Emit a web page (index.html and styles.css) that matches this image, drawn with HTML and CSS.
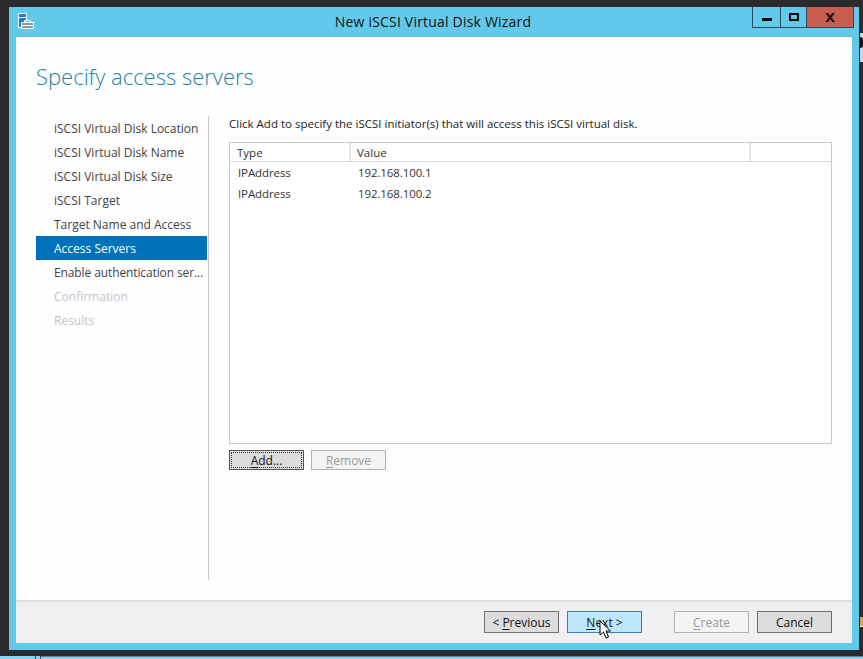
FILE: index.html
```html
<!DOCTYPE html>
<html lang="en">
<head>
    <meta charset="UTF-8">
    <title>New iSCSI Virtual Disk Wizard</title>
    <link rel="stylesheet" href="styles.css">
</head>
<body>

    <div class="window">
        <div class="titlebar">
            <svg class="app-icon" width="16" height="16" viewBox="0 0 16 16">
                <rect x="0.5" y="0.5" width="8" height="14" fill="#1c7ed6" stroke="#fff"/>
                <rect x="1" y="4" width="7" height="1" fill="#fff"/>
                <rect x="3.5" y="9.5" width="12" height="6" fill="#8a95a3" stroke="#fff"/>
                <path d="M6.5 9V7.5h6V9" fill="#63c9eb" stroke="#fff"/>
                <rect x="4" y="12" width="11" height="1" fill="#fff"/>
            </svg>
            <div class="title">New iSCSI Virtual Disk Wizard</div>
            <div class="winbtns">
                <div class="winbtn min"><span class="min-glyph"></span></div>
                <div class="winbtn max"><span class="max-glyph"></span></div>
                <div class="winbtn close">X</div>
            </div>
        </div>

        <div class="client">
            <div class="content">
                <h1 class="heading">Specify access servers</h1>
                <div class="columns">
                    <ul class="steps">
                        <li>iSCSI Virtual Disk Location</li>
                        <li>iSCSI Virtual Disk Name</li>
                        <li>iSCSI Virtual Disk Size</li>
                        <li>iSCSI Target</li>
                        <li>Target Name and Access</li>
                        <li class="current">Access Servers</li>
                        <li class="tight">Enable authentication ser...</li>
                        <li class="disabled">Confirmation</li>
                        <li class="disabled">Results</li>
                    </ul>
                    <div class="panel">
                        <p class="intro">Click Add to specify the iSCSI initiator(s) that will access this iSCSI virtual disk.</p>
                        <div class="list">
                            <div class="list-head">
                                <div class="col-type">Type</div>
                                <div class="col-value">Value</div>
                                <div class="col-extra"></div>
                            </div>
                            <div class="list-row">
                                <div class="col-type">IPAddress</div>
                                <div class="col-value">192.168.100.1</div>
                            </div>
                            <div class="list-row">
                                <div class="col-type">IPAddress</div>
                                <div class="col-value">192.168.100.2</div>
                            </div>
                        </div>
                        <div class="list-actions">
                            <button class="btn focused"><span class="focus-ring"><u>A</u>dd...</span></button>
                            <button class="btn off"><u>R</u>emove</button>
                        </div>
                    </div>
                </div>
            </div>
            <div class="footer">
                <button class="btn">&lt; <u>P</u>revious</button>
                <div class="next-wrap">
                    <button class="btn hover"><u>N</u>ext &gt;</button>
                    <svg class="cursor" width="13" height="20" viewBox="0 0 13 20">
                        <path d="M1 1V15L4.5 12L7 18L9.5 17L7 11H11.5Z" fill="#fff" stroke="#000"/>
                    </svg>
                </div>
                <button class="btn off create"><u>C</u>reate</button>
                <button class="btn">Cancel</button>
            </div>
        </div>
    </div>

    <!-- bits of the windows behind the wizard -->
    <div class="behind-right"><span class="behind-glyph"></span></div>
    <div class="behind-right-low"></div>
    <div class="bottom-strip"></div>
    <div class="bottom-line"></div>
    <div class="bottom-tick first"></div>
    <div class="bottom-tick second"></div>

</body>
</html>
```

FILE: styles.css
```css
html, body { margin: 0; height: 659px; overflow: hidden; }
body { background: #2b2b2b; font-family: "Open Sans", "Noto Sans", sans-serif; font-size: 12px; position: relative; }

.window { width: 850px; height: 643px; margin: 7px 0 0 9px; background: #63c9eb; padding: 0 7px 7px; box-sizing: border-box; display: flex; flex-direction: column; }

.titlebar { height: 30px; flex: none; display: flex; align-items: flex-start; position: relative; }
.app-icon { margin: 6px 0 0 2px; }
.title { position: absolute; left: 0; right: 2px; top: 5px; text-align: center; font-size: 14px; letter-spacing: 0.2px; color: #111; line-height: 20px; }
.winbtns { position: absolute; right: -2px; top: 0; display: flex; height: 21px; border: 1px solid #2d4a5c; border-top: 0; box-sizing: border-box; }
.winbtn { height: 20px; display: flex; align-items: center; justify-content: center; box-sizing: border-box; }
.winbtn.min { width: 28px; border-right: 1px solid #2d4a5c; }
.winbtn.max { width: 26px; border-right: 1px solid #2d4a5c; }
.winbtn.close { width: 46px; background: #c75c50; font: bold 13px "DejaVu Sans", sans-serif; color: #111; }
.min-glyph { width: 10px; height: 3px; background: #000; margin-top: 5px; }
.max-glyph { width: 6px; height: 4px; border: 2px solid #000; }

.client { flex: 1; background: #fff; display: flex; flex-direction: column; min-height: 0; box-shadow: 0 -1px 0 #6fb4d6; }
.content { flex: 1; min-height: 0; padding: 0 20px 0 20px; display: flex; flex-direction: column; background: #fefefe; }

.heading { margin: 24px 0 0; font-size: 22px; font-weight: 300; line-height: 30px; color: #1a84a8; height: 55px; }

.columns { flex: 1; display: flex; min-height: 0; padding-bottom: 20px; }

.steps { list-style: none; margin: 0; padding: 0; width: 172px; flex: none; border-right: 1px solid #c8c8c8; }
.steps li { height: 24px; line-height: 26px; padding-left: 18px; color: #444; white-space: nowrap; overflow: hidden; }
.steps li.current { background: #0072bc; color: #fff; margin-right: 1px; }
.steps li.tight { letter-spacing: -0.11px; }
.steps li.disabled { color: #c4c4c4; }

.panel { flex: 1; padding: 0 0 0 20px; min-width: 0; }
.intro { margin: 0; height: 26px; line-height: 16px; font-size: 11.5px; color: #222; white-space: nowrap; }

.list { height: 302px; border: 1px solid #c8c8c8; box-sizing: border-box; background: #fff; color: #333; font-size: 11.5px; }
.list-head { display: flex; height: 19px; line-height: 20px; border-bottom: 1px solid #d8d8d8; box-sizing: border-box; }
.list-head .col-type, .list-head .col-value { border-right: 2px solid #e2e2e2; box-sizing: border-box; height: 18px; }
.col-type { width: 121px; padding-left: 7px; box-sizing: border-box; }
.col-value { width: 400px; padding-left: 6px; box-sizing: border-box; }
.col-extra { flex: 1; }
.list-row { display: flex; height: 21px; line-height: 21px; letter-spacing: -0.1px; }
.list-row .col-type { padding-left: 8px; }
.list-row .col-value { padding-left: 7px; }

.list-actions { display: flex; gap: 7px; margin-top: 6px; }

.btn { width: 75px; height: 22px; padding: 2px 0 0; background: #dcdcdc; border: 1px solid #707070; font-family: inherit; font-size: 12px; color: #111; box-sizing: border-box; line-height: 18px; }
.btn u { text-decoration-thickness: 1px; text-underline-offset: 2px; }
.btn.off { background: #f4f4f4; border-color: #adb2b5; color: #9a9a9a; }
.list-actions .btn { height: 20px; line-height: 16px; }
.btn.focused { border-color: #555; padding: 1px; }
.focus-ring { display: block; height: 100%; border: 1px dotted #333; box-sizing: border-box; line-height: 16px; }
.btn.hover { background: #bee6fd; border-color: #3c7fb1; }

.footer { height: 43px; flex: none; background: #f0f0f0; border-top: 2px solid #dfdfdf; display: flex; align-items: flex-start; padding: 9px 20px 0 0; justify-content: flex-end; gap: 8px; box-sizing: border-box; }
.next-wrap { position: relative; height: 22px; }
.cursor { position: absolute; left: 32px; top: 9px; }
.create { margin-left: 24px; }

.behind-right { position: absolute; left: 860px; top: 33px; width: 3px; height: 29px; background: #c3d7df; }
.behind-glyph { position: absolute; left: 0; top: 4px; width: 3px; height: 11px; background: #111; border-radius: 0 5px 5px 0; }
.behind-right-low { position: absolute; left: 860px; top: 617px; width: 3px; height: 9px; background: #d9a441; border-bottom: 1px solid #fff; }
.bottom-strip { position: absolute; left: 0; right: 0; bottom: 0; height: 3px; background: #86d3ef; }
.bottom-line { position: absolute; left: 41px; right: 0; top: 656px; height: 1px; background: #6a7a82; }
.bottom-tick { position: absolute; top: 656px; width: 1px; height: 3px; background: #2d4a5c; }
.bottom-tick.first { left: 35px; }
.bottom-tick.second { left: 40px; }
```
